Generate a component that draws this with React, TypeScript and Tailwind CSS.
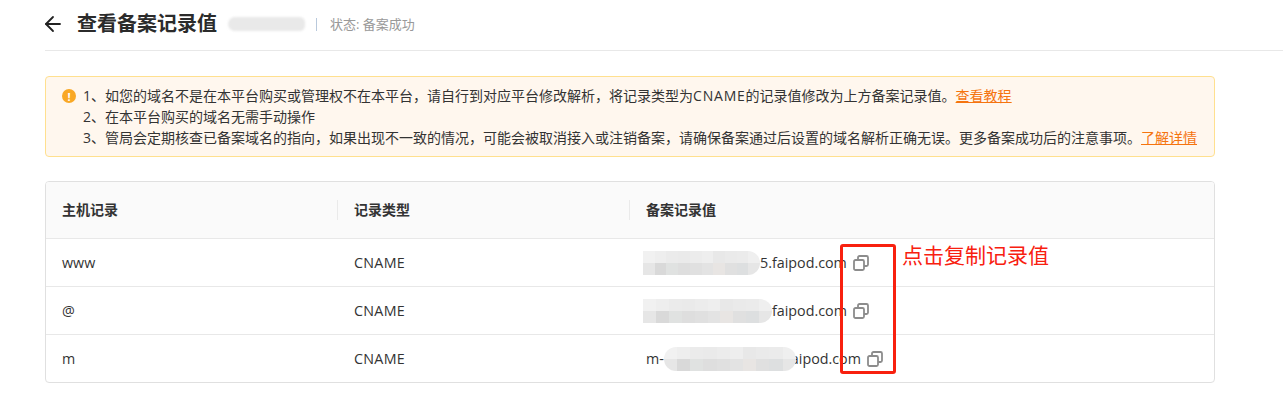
import { ArrowLeft } from "lucide-react";

const FONT = "font-['Open_Sans','Noto_Sans_CJK_SC',sans-serif]";

function CopyIcon() {
  return (
    <svg width="16" height="16" viewBox="0 0 16 16" fill="none" stroke="#8c8c8c" strokeWidth="1.8" className="shrink-0">
      <rect x="1" y="5" width="10" height="10" rx="1.5" />
      <path d="M5 5V2.5A1.5 1.5 0 0 1 6.5 1h7A1.5 1.5 0 0 1 15 2.5v7a1.5 1.5 0 0 1-1.5 1.5H11" />
    </svg>
  );
}

const top1 = ["bg-[#f1f1f1]", "bg-[#eeeeee]", "bg-[#ebebeb]", "bg-[#eaeaea]", "bg-[#ececec]", "bg-[#eeeeee]", "bg-[#e8e8e8]", "bg-[#eaeaea]", "bg-[#ebebeb]", "bg-[#efefef]"];
const bottom1 = ["bg-[#e6e6e6]", "bg-[#d9d9d9]", "bg-[#e0e2e1]", "bg-[#dedede]", "bg-[#e0e0e0]", "bg-[#e3e3e3]", "bg-[#e8e5e3]", "bg-[#e0e0e0]", "bg-[#dddfe0]", "bg-[#e6e6e6]"];

function Mosaic({ className }: { className: string }) {
  return (
    <div className={`relative flex flex-col overflow-hidden rounded-r-xl ${className}`}>
      <div className="flex flex-1">
        {top1.map((c, i) => (
          <div key={i} className={`flex-1 ${c}`} />
        ))}
      </div>
      <div className="flex flex-1">
        {bottom1.map((c, i) => (
          <div key={i} className={`flex-1 ${c}`} />
        ))}
      </div>
    </div>
  );
}

const rows = [
  { host: "www", prefix: "", blur: "w-[117px] -ml-[3px]", suffix: "5.faipod.com" },
  { host: "@", prefix: "", blur: "w-[129px] -ml-[3px]", suffix: "faipod.com" },
  { host: "m", prefix: "m-", blur: "w-[132px] -mr-[5px] rounded-l-xl", suffix: "aipod.com" },
];

export default function App() {
  return (
    <div className={`relative w-[1283px] h-[409px] overflow-hidden bg-white text-sm text-[#333] ${FONT}`}>
      <header className="flex items-center h-[51px] ml-[45px] pb-[2px] border-b border-[#e8e8e8]">
        <ArrowLeft size={24} strokeWidth={1.8} className="-ml-[4px] text-[#222]" />
        <h1 className="ml-[12px] text-[20px] font-bold text-[#2b2b2b]">查看备案记录值</h1>
        <div className="ml-[11px] w-[77px] h-[14px] rounded-r-md rounded-l-lg bg-[#e9e9e9] blur-[1px]" />
        <span className="ml-[11px] w-px h-[13px] bg-[#b9c9dc]" />
        <span className="ml-[13px] text-[13px] text-[#999]">状态: 备案成功</span>
      </header>

      <div className="flex w-[1170px] h-[81px] mt-[25px] ml-[45px] pt-[8px] pl-[16px] rounded border border-[#ffe08f] bg-[#fff7ee] leading-[21px]">
        <span className="flex items-center justify-center shrink-0 w-[14px] h-[14px] mt-[4px] rounded-full bg-[#f9a825] text-white text-[11px] font-bold leading-none">!</span>
        <div className="ml-[7px] whitespace-nowrap">
          <p>1、如您的域名不是在本平台购买或管理权不在本平台，请自行到对应平台修改解析，将记录类型为<span className="tracking-[0.8px]">CNAME</span>的记录值修改为上方备案记录值。<a className="text-[#f5740f] underline">查看教程</a></p>
          <p>2、在本平台购买的域名无需手动操作</p>
          <p>3、管局会定期核查已备案域名的指向，如果出现不一致的情况，可能会被取消接入或注销备案，请确保备案通过后设置的域名解析正确无误。更多备案成功后的注意事项。<a className="text-[#f5740f] underline">了解详情</a></p>
        </div>
      </div>

      <div className="w-[1170px] h-[202px] mt-[24px] ml-[45px] rounded border border-[#e0e0e0] overflow-hidden">
        <div className="flex items-center h-[57px] bg-[#fafafa] border-b border-[#e8e8e8] font-bold text-[#333]">
          <div className="w-[292px] pl-[16px] border-r border-[#eaeaea] leading-[20px]">主机记录</div>
          <div className="w-[292px] pl-[16px] border-r border-[#eaeaea] leading-[20px]">记录类型</div>
          <div className="pl-[16px] leading-[20px]">备案记录值</div>
        </div>
        {rows.map((r) => (
          <div key={r.host} className="flex items-center h-[48px] pt-[1px] border-b border-[#e8e8e8] text-[14.3px]">
            <div className="w-[292px] pl-[16px]">{r.host}</div>
            <div className="w-[292px] pl-[16px] tracking-[0.3px]">CNAME</div>
            <div className="flex items-center pl-[16px]">
              {r.prefix}
              <Mosaic className={`h-[24px] ${r.blur}`} />
              {r.suffix}
              <span className="ml-[6px]">
                <CopyIcon />
              </span>
            </div>
          </div>
        ))}
      </div>

      <div className="absolute left-[840px] top-[244px] w-[56px] h-[130px] rounded-[3px] border-[3px] border-[#f8200f]" />
      <div className="absolute left-[902px] top-[240px] text-[21px] leading-[30px] text-[#f8200f]">点击复制记录值</div>
    </div>
  );
}
